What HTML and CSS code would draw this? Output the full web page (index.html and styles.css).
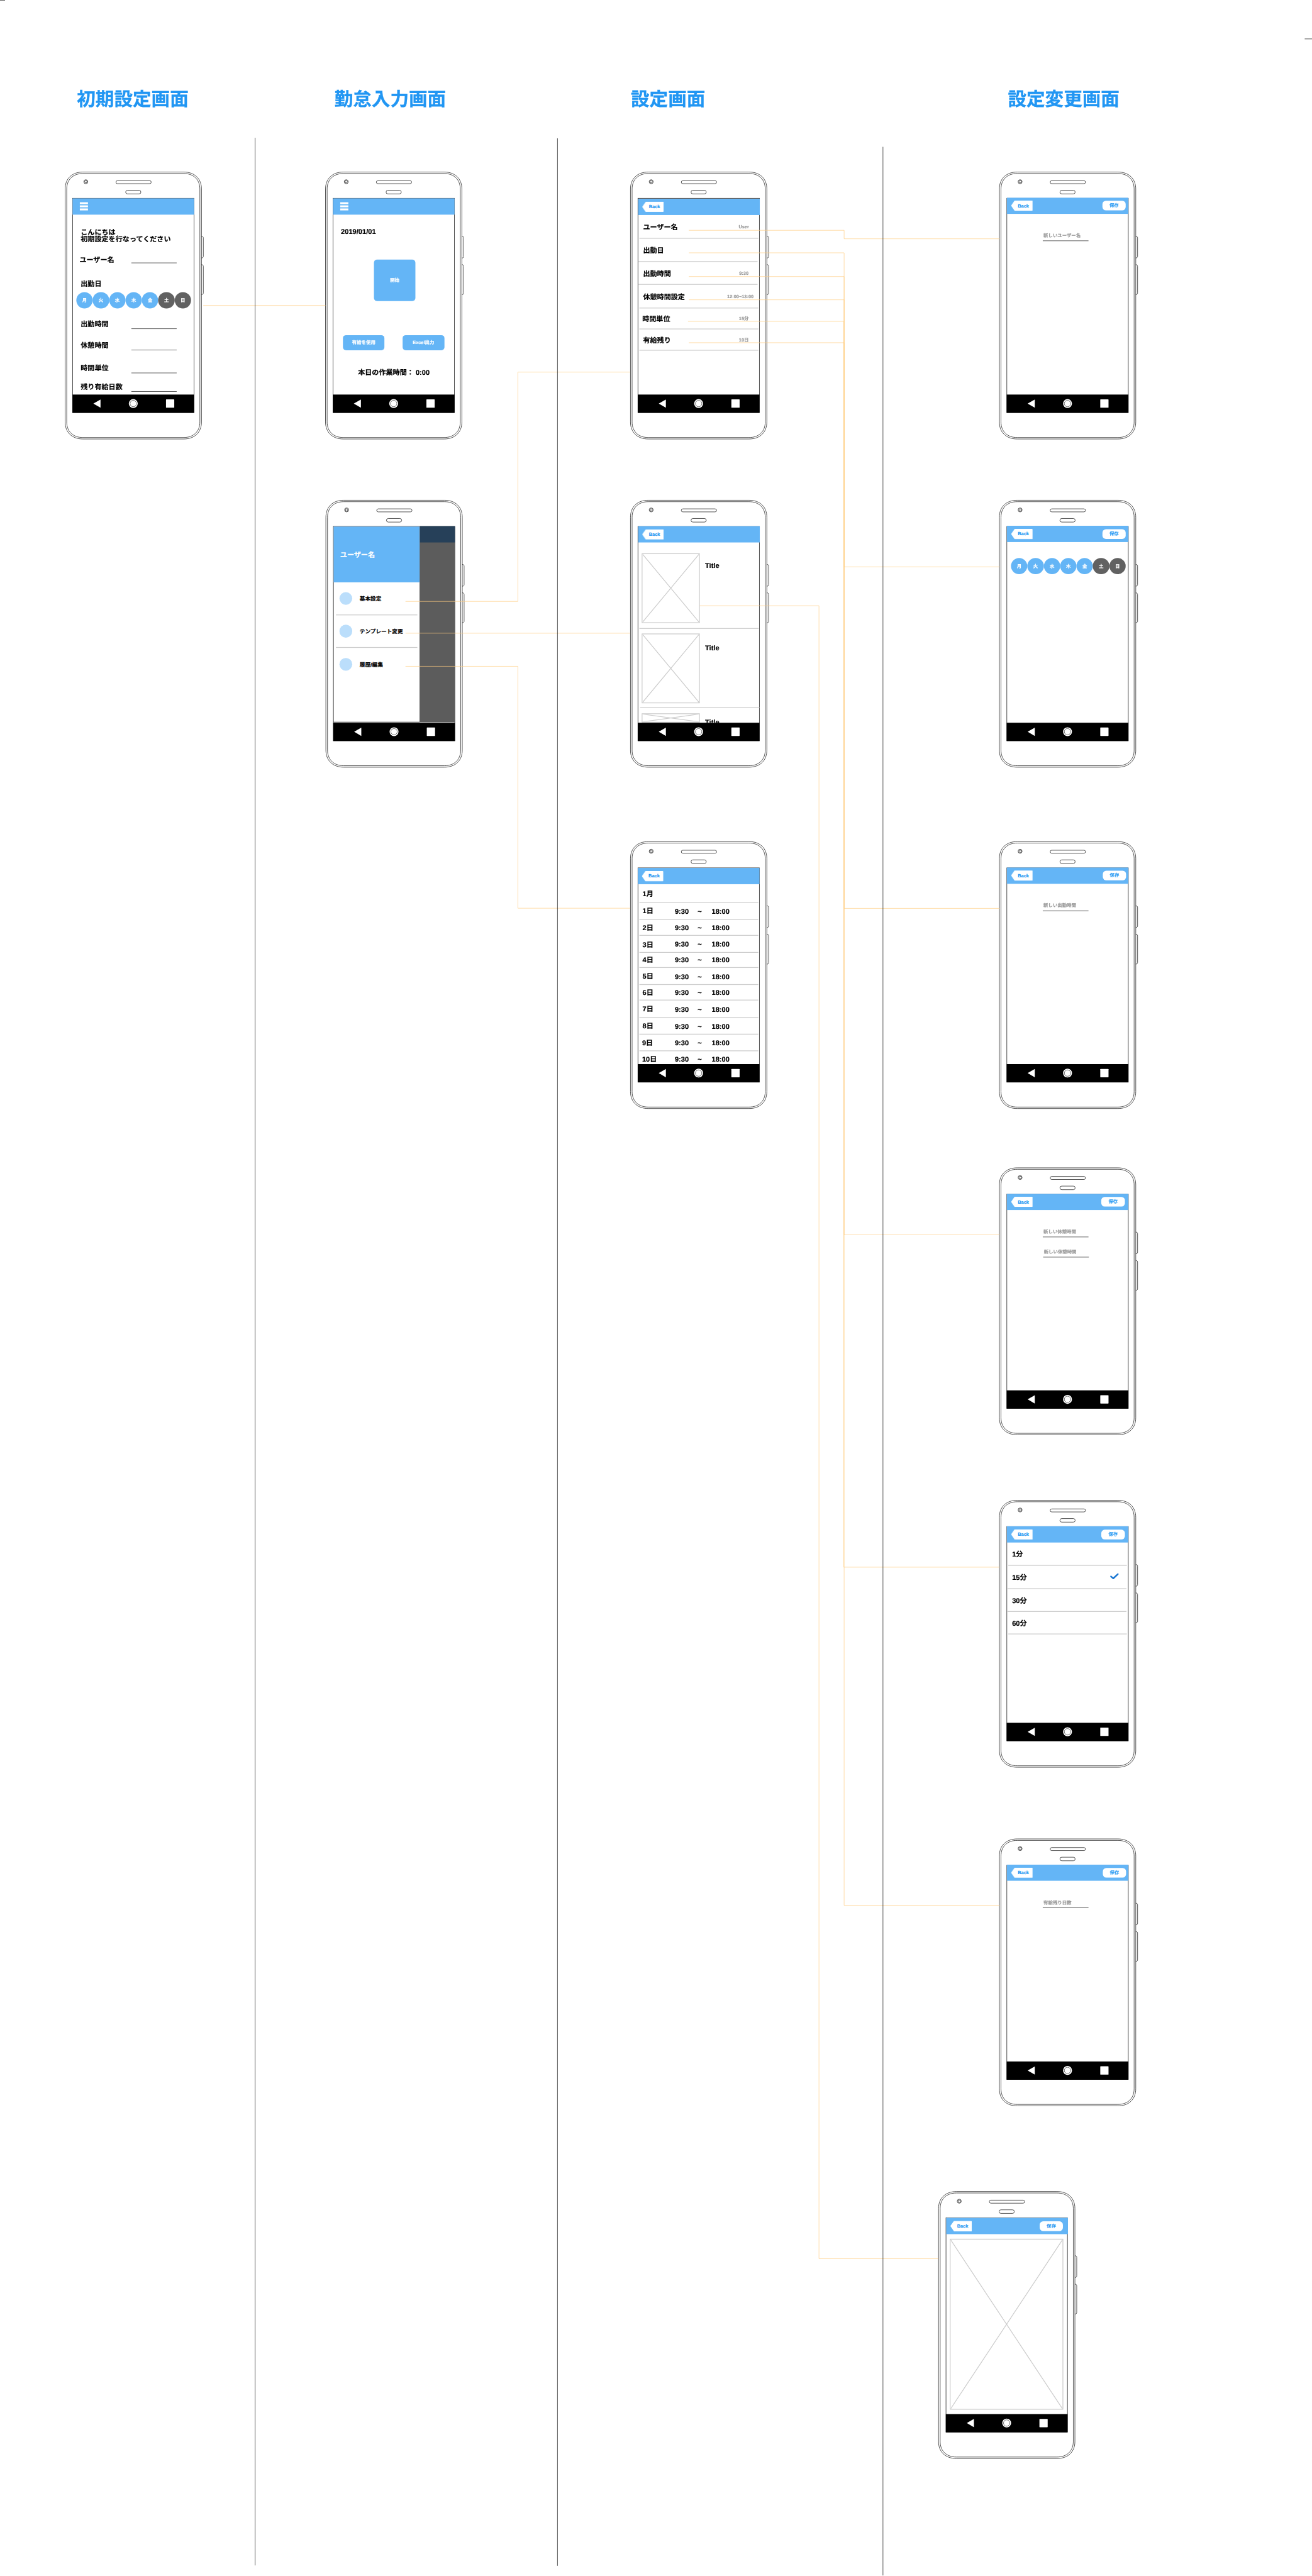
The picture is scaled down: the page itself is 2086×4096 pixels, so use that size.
FILE: index.html
```html
<!DOCTYPE html>
<html lang="ja">
<head>
<meta charset="utf-8">
<title>勤怠アプリ ワイヤーフレーム</title>
<link rel="stylesheet" href="styles.css">
</head>
<body>
<svg class="defs" aria-hidden="true">
  <symbol id="frame" viewBox="-2 -2 364 694">
    <g fill="none" stroke="#000" stroke-width="1.1">
      <path d="M46 0H306C334 0 352 17 352 44V645C352 672 334 689 306 689H46C18 689 0 672 0 645V44C0 17 18 0 46 0Z" fill="#fff"/>
      <path d="M46 3.8H306C331 3.8 347.8 19 347.8 44V645C347.8 670 331 685.2 306 685.2H46C21 685.2 4.2 670 4.2 645V44C4.2 19 21 3.8 46 3.8Z"/>
      <circle cx="53.5" cy="25" r="5.2"/><circle cx="53.5" cy="25" r="3.1"/>
      <rect x="131.2" y="22.3" width="91" height="7.8" rx="3.9"/>
      <rect x="156.3" y="47.2" width="39.3" height="9.2" rx="4.6"/>
      <path d="M352 165.8C355.5 165.8 356.7 167.500 356.700 170V217.500C356.700 220 355.500 221.800 352 221.800"/>
      <path d="M352 239C355.500 239 356.700 241 356.700 243.500V312C356.700 314.500 355.500 316.200 352 316.200"/>
      <rect x="19.300" y="67.800" width="313.400" height="553" stroke-width="1.300" stroke="#222"/>
    </g>
    <rect x="18.800" y="574.300" width="314.200" height="47.200"/>
    <path d="M73 597.600L91.400 587V608.300Z" fill="#fff"/>
    <circle cx="175.900" cy="597.500" r="11.500" fill="#fff"/>
    <circle cx="175.900" cy="597.500" r="8.200" fill="none" stroke="#000" stroke-width=".9"/>
    <rect x="260.400" y="586.700" width="21.300" height="21.600" rx="1" fill="#fff"/>
  </symbol>
  <symbol id="cross" viewBox="0 0 100 100" preserveAspectRatio="none">
    <path d="M0 0L100 100M100 0L0 100" stroke="#ccc" stroke-width="2" fill="none" vector-effect="non-scaling-stroke"/>
  </symbol>
</svg>

<div class="viewport">
<main class="board">
  <h2 class="heading h-setup">初期設定画面</h2>
  <h2 class="heading h-input">勤怠入力画面</h2>
  <h2 class="heading h-settings">設定画面</h2>
  <h2 class="heading h-change">設定変更画面</h2>

  <section class="phone p-setup">
    <svg class="frame"><use href="#frame"/></svg>
    <div class="screen">
      <header class="bar bar-menu"><i></i><i></i><i></i></header>
      <div class="setup">
        <p class="greeting">こんにちは<br>初期設定を行なってください</p>
        <div class="field field-name"><span>ユーザー名</span><b></b></div>
        <div class="field"><span>出勤日</span></div>
        <div class="days"><span>月</span><span>火</span><span>水</span><span>木</span><span>金</span><span class="off">土</span><span class="off">日</span></div>
        <div class="field"><span>出勤時間</span><b></b></div>
        <div class="field"><span>休憩時間</span><b></b></div>
        <div class="field"><span>時間単位</span><b></b></div>
        <div class="field"><span>残り有給日数</span><b></b></div>
      </div>
    </div>
  </section>

  <section class="phone p-input">
    <svg class="frame"><use href="#frame"/></svg>
    <div class="screen">
      <header class="bar bar-menu"><i></i><i></i><i></i></header>
      <div class="input">
        <p class="date">2019/01/01</p>
        <div class="start">開始</div>
        <div class="actions"><span>有給を使用</span><span>Excel出力</span></div>
        <p class="total">本日の作業時間： 0:00</p>
      </div>
    </div>
  </section>

  <section class="phone p-settings">
    <svg class="frame"><use href="#frame"/></svg>
    <div class="screen">
      <header class="bar"><span class="back">Back</span></header>
      <ul class="list list-settings">
        <li><span>ユーザー名</span><em>User</em></li>
        <li class="shift"><span>出勤日</span></li>
        <li class="shift"><span>出勤時間</span><em>9:30</em></li>
        <li><span>休憩時間設定</span><em class="wide">12:00~13:00</em></li>
        <li class="outdent"><span>時間単位</span><em>15分</em></li>
        <li><span>有給残り</span><em>10日</em></li>
      </ul>
    </div>
  </section>

  <section class="phone p-drawer">
    <svg class="frame"><use href="#frame"/></svg>
    <div class="screen">
      <div class="drawer-view">
        <nav class="drawer">
          <header>ユーザー名</header>
          <div class="item"><i></i><span>基本設定</span></div>
          <div class="item"><i></i><span>テンプレート変更</span></div>
          <div class="item"><i></i><span>履歴/編集</span></div>
        </nav>
        <div class="scrim"></div>
      </div>
    </div>
  </section>

  <section class="phone p-template">
    <svg class="frame"><use href="#frame"/></svg>
    <div class="screen">
      <header class="bar"><span class="back">Back</span></header>
      <div class="cards">
        <article><svg class="thumb"><use href="#cross"/></svg><h3>Title</h3></article>
        <article><svg class="thumb"><use href="#cross"/></svg><h3>Title</h3></article>
        <article><svg class="thumb"><use href="#cross"/></svg><h3>Title</h3></article>
      </div>
    </div>
  </section>

  <section class="phone p-history">
    <svg class="frame"><use href="#frame"/></svg>
    <div class="screen">
      <header class="bar"><span class="back">Back</span></header>
      <ul class="list list-history">
        <li><span>1月</span></li>
        <li><span>1日</span><time>9:30</time><s>~</s><time>18:00</time></li>
        <li><span>2日</span><time>9:30</time><s>~</s><time>18:00</time></li>
        <li><span>3日</span><time>9:30</time><s>~</s><time>18:00</time></li>
        <li><span>4日</span><time>9:30</time><s>~</s><time>18:00</time></li>
        <li class="low"><span>5日</span><time>9:30</time><s>~</s><time>18:00</time></li>
        <li><span>6日</span><time>9:30</time><s>~</s><time>18:00</time></li>
        <li class="low"><span>7日</span><time>9:30</time><s>~</s><time>18:00</time></li>
        <li class="low"><span>8日</span><time>9:30</time><s>~</s><time>18:00</time></li>
        <li><span>9日</span><time>9:30</time><s>~</s><time>18:00</time></li>
        <li><span>10日</span><time>9:30</time><s>~</s><time>18:00</time></li>
      </ul>
    </div>
  </section>

  <section class="phone p-name">
    <svg class="frame"><use href="#frame"/></svg>
    <div class="screen">
      <header class="bar"><span class="back">Back</span><span class="save">保存</span></header>
      <div class="entry"><p>新しいユーザー名</p></div>
    </div>
  </section>

  <section class="phone p-days">
    <svg class="frame"><use href="#frame"/></svg>
    <div class="screen">
      <header class="bar"><span class="back">Back</span><span class="save">保存</span></header>
      <div class="days"><span>月</span><span>火</span><span>水</span><span>木</span><span>金</span><span class="off">土</span><span class="off">日</span></div>
    </div>
  </section>

  <section class="phone p-time">
    <svg class="frame"><use href="#frame"/></svg>
    <div class="screen">
      <header class="bar"><span class="back">Back</span><span class="save">保存</span></header>
      <div class="entry"><p>新しい出勤時間</p></div>
    </div>
  </section>

  <section class="phone p-rest">
    <svg class="frame"><use href="#frame"/></svg>
    <div class="screen">
      <header class="bar"><span class="back">Back</span><span class="save">保存</span></header>
      <div class="entry"><p>新しい休憩時間</p><p>新しい休憩時間</p></div>
    </div>
  </section>

  <section class="phone p-unit">
    <svg class="frame"><use href="#frame"/></svg>
    <div class="screen">
      <header class="bar"><span class="back">Back</span><span class="save">保存</span></header>
      <ul class="list list-unit">
        <li><span>1分</span></li>
        <li class="shift"><span>15分</span><svg class="check" viewBox="0 0 22 16"><path d="M2 8.500L8 13.600L20 2.300" fill="none" stroke="#1976d2" stroke-width="4" stroke-linecap="round" stroke-linejoin="round"/></svg></li>
        <li class="shift"><span>30分</span></li>
        <li><span>60分</span></li>
      </ul>
    </div>
  </section>

  <section class="phone p-leave">
    <svg class="frame"><use href="#frame"/></svg>
    <div class="screen">
      <header class="bar"><span class="back">Back</span><span class="save">保存</span></header>
      <div class="entry"><p>有給残り日数</p></div>
    </div>
  </section>

  <section class="phone p-preview">
    <svg class="frame"><use href="#frame"/></svg>
    <div class="screen">
      <header class="bar"><span class="back">Back</span><span class="save">保存</span></header>
      <svg class="thumb thumb-large"><use href="#cross"/></svg>
    </div>
  </section>

  <svg class="lines" viewBox="0 0 3386 6648">
    <g fill="none" stroke="#ffcc80" stroke-width="1.1">
      <path d="M524.600 788.400H840"/>
      <path d="M1046.400 1552.100H1336.500V960.400H1626.500"/>
      <path d="M1046.400 1634.200H1626.500"/>
      <path d="M1046.400 1719.600H1336.500V2344H1626.500"/>
      <path d="M1777.600 594.400H2178.400V616.300H2579.400"/>
      <path d="M1777.600 652.500H2178.400V1463H2579.400"/>
      <path d="M1777.600 713.700H2178.400V2344.400H2579.400"/>
      <path d="M1777.600 773.700H2178.400V3186.700H2579.400"/>
      <path d="M1775.500 829.400H2177.500V4044.600H2579.400"/>
      <path d="M1777.600 884.500H2178.400V4917.600H2579.400"/>
      <path d="M1805.700 1563.400H2113.500V5829.300H2421.700"/>
    </g>
    <g stroke="#000" stroke-width="1.100">
      <path d="M658.300 355.500V6621"/>
      <path d="M1438.700 357V6622"/>
      <path d="M2278.600 379V6647"/>
      <path d="M3367 100.400H3386"/>
      <path d="M0 .6H13"/>
    </g>
  </svg>
</main>
</div>
</body>
</html>
```

FILE: styles.css
```css
* { box-sizing: border-box; margin: 0; padding: 0; }

body {
  background: #fff;
  font-family: "Liberation Sans", "Noto Sans CJK JP", sans-serif;
  font-weight: 700;
  color: #000;
  text-rendering: geometricPrecision;
}

.defs { display: block; width: 0; height: 0; }

.viewport { width: 2086px; height: 4096px; overflow: hidden; }

.board {
  position: relative;
  width: 3386px;
  height: 6648px;
  transform: scale(0.6161);
  transform-origin: 0 0;
}

.lines { position: absolute; left: 0; top: 0; width: 3386px; height: 6648px; }

.heading {
  position: absolute;
  top: 232.500px;
  font-size: 48px;
  line-height: 48px;
  color: #2196f3;
  white-space: nowrap;
  -webkit-text-stroke: .5px;
}
.h-setup { left: 198.500px; }
.h-input { left: 863px; }
.h-settings { left: 1628px; }
.h-change { left: 2601px; }

/* Phones on the canvas */
.phone {
  --bar-top: 2px;
  --bar-left: 0px;
  --save-gap: 7px;
  position: absolute;
  width: 360px;
  height: 690px;
  padding: 66px 0 0 19px;
  font-size: 18px;
  line-height: 18px;
  white-space: nowrap;
  -webkit-text-stroke: .3px;
}
.frame { position: absolute; left: -2px; top: -2px; width: 364px; height: 694px; }

.p-setup { left: 168.200px; top: 443.700px; }
.p-input { left: 840.300px; top: 443.700px; }
.p-settings { left: 1626.500px; top: 443.700px; --bar-top: 3.300px; --bar-left: 1px; }
.p-name { left: 2579.400px; top: 443.700px; --bar-top: 0px; }
.p-drawer { left: 841.300px; top: 1290.700px; }
.p-template { left: 1626.500px; top: 1290.700px; --bar-top: 1.500px; --bar-left: 1px; }
.p-history { left: 1626.500px; top: 2172.200px; }
.p-days { left: 2579.400px; top: 1290.700px; --bar-top: .5px; }
.p-time { left: 2579.400px; top: 2172.200px; --bar-top: .4px; --save-gap: 6px; }
.p-rest { left: 2579.400px; top: 3014.300px; --bar-top: .4px; --save-gap: 9.500px; }
.p-unit { left: 2579.400px; top: 3872px; --bar-top: 1px; --save-gap: 9.500px; }
.p-leave { left: 2579.400px; top: 4746px; --bar-top: .2px; --save-gap: 6px; }
.p-preview { left: 2421.700px; top: 5656.200px; --bar-top: 2px; --bar-left: 1px; --save-gap: 12.500px; }

.screen {
  position: relative;
  width: 315px;
  height: 508.300px;
  overflow: hidden;
}

.bar {
  display: flex;
  align-items: center;
  justify-content: space-between;
  width: 314px;
  height: 42px;
  margin: var(--bar-top) 0 0 var(--bar-left);
  padding: 0 var(--save-gap) 0 10.800px;
  background: #64b5f6;
  font-size: 12px;
  line-height: 12px;
  color: #2196f3;
}
.bar-menu {
  flex-direction: column;
  align-items: flex-start;
  justify-content: center;
  gap: 3px;
  padding-left: 18.900px;
}
.bar-menu i { width: 20.700px; height: 5px; background: #fff; }

.back {
  width: 55.600px;
  height: 27px;
  padding: 7.800px 0 0 17.300px;
  background: #fff;
  border-radius: 0 2px 2px 0;
  clip-path: polygon(0 50%, 17% 0, 100% 0, 100% 100%, 17% 100%);
}
.save {
  width: 60.500px;
  height: 25px;
  border-radius: 9px;
  background: #fff;
  line-height: 25px;
  text-align: center;
  font-weight: 500;
}

/* Initial setup */
.setup {
  display: grid;
  align-items: end;
  grid-template-rows: 72.300px 57.700px 61.200px 51.100px 52.900px 55.200px 58.600px 48.500px;
}
.greeting { padding-left: 21px; margin-bottom: -1px; }
.field { display: flex; align-items: center; height: 28px; padding-left: 21px; }
.field span { width: 130.400px; padding-top: 2px; }
.field b { width: 117.500px; align-self: stretch; border-bottom: 1px solid #000; }
.field-name { padding-left: 18px; }
.field-name span { width: 133.400px; }
.field-name b { margin-bottom: 5px; }

.days { display: flex; padding-left: 10px; font-size: 12px; }
.days span {
  width: 42.250px;
  height: 42.250px;
  border-radius: 50%;
  background: #64b5f6;
  color: #fff;
  line-height: 42.250px;
  text-align: center;
}
.days .off { background: #616161; }
.p-days .days { padding: 40.600px 0 0 10.800px; }

/* Attendance input */
.input {
  display: grid;
  align-items: end;
  grid-template-rows: 53.300px 170.400px 126.700px 66px;
}
.date { padding-left: 20.500px; }
.start, .actions span {
  width: 107.600px;
  border-radius: 8px;
  background: #64b5f6;
  color: #fff;
  font-size: 12px;
  text-align: center;
}
.start { height: 107px; margin-left: 105.600px; line-height: 107px; }
.actions { display: flex; gap: 46.500px; padding-left: 25.600px; }
.actions span { height: 39.200px; line-height: 39.200px; }
.total { padding-left: 64.500px; margin-bottom: -.5px; }

/* Row lists */
.list { display: grid; width: 315px; list-style: none; }
.list li {
  display: flex;
  align-items: center;
  margin: 0 4px;
  padding-left: 10px;
  border-bottom: 2px solid #ccc;
}
.list span { padding-top: 2px; }
.list .shift { margin: 0 6px 0 1px; padding-left: 13px; }
.list em {
  width: 70px;
  margin-left: auto;
  margin-right: 2px;
  font-style: normal;
  font-size: 12px;
  text-align: center;
  color: #999;
}
.list .shift em { margin-right: 0; }
.list .wide { margin-right: 11px; }
.list .outdent { padding-left: 8px; }
.list-settings { grid-template-rows: 61.500px 60px 58.800px 61.200px 54px 55px; }

.list-unit { grid-template-rows: 60.400px 59.900px 58.900px 57.800px; }
.list-unit li { margin-right: 5px; padding-left: 9.500px; }
.list-unit .shift { padding-left: 12.500px; }
.check { width: 22px; height: 16px; margin: -5px 20.500px 0 auto; }

.list-history {
  grid-template-rows: 48px 43.500px 41.100px 44.400px 38.700px 43.900px 40.400px 44.500px 43.500px 43.300px 42px;
}
.list-history li { padding-left: 8.500px; }
.list-history span { width: 83.500px; padding-top: 1px; }
.list-history time, .list-history s { padding-top: 1.500px; }
.list-history time:first-of-type { width: 59px; }
.list-history s { width: 36px; text-decoration: none; }
.list-history .low time, .list-history .low s { padding-top: 5px; }
.list-history li:first-child span { padding-top: 3px; }
.list-history li:nth-child(4) span { padding-top: 5px; }
.list-history li:nth-child(10), .list-history li:nth-child(11) { padding-left: 7.500px; }
.list-history li:nth-child(10) span, .list-history li:nth-child(11) span { width: 84.500px; }

/* Drawer */
.drawer-view { display: flex; width: 313.500px; height: 507px; padding-top: 1.500px; }
.drawer {
  width: 223.600px;
  border: 1.500px solid #000;
  background: #fff;
}
.drawer header {
  height: 144px;
  padding: 63.500px 0 0 16.500px;
  background: #64b5f6;
  color: #fff;
}
.item {
  display: flex;
  align-items: center;
  gap: 19px;
  height: 84.500px;
  margin: 0 5.500px;
  padding-left: 8.800px;
  border-bottom: 2px solid #ccc;
  font-size: 14px;
}
.item span { padding-top: 2px; }
.item:last-child { border-bottom: 0; }
.item i { width: 33.600px; height: 33.600px; border-radius: 50%; background: #bbdefb; }
.scrim { flex: 1; border-top: 42.500px solid #264059; background: #5c5c5c; }

/* Template cards */
.cards { display: grid; grid-template-rows: 222.800px 203.900px 80px; }
.cards article {
  display: flex;
  gap: 13.500px;
  margin: 0 2.500px 0 4.300px;
  padding: 12.200px 0 0 6.100px;
  border-bottom: 2px solid #ccc;
}
.cards article:first-child { padding-top: 27.800px; }
.cards article:nth-child(2) { margin: 0 1px 0 6.300px; padding-left: 4.100px; }
.cards article:last-child { padding-top: 13.800px; }
.cards h3 { font-size: 18px; line-height: 18px; padding-top: 23px; }
.cards article:nth-child(2) h3 { padding-top: 27.500px; }
.cards article:last-child h3 { padding-top: 14.500px; }
.thumb { width: 150.200px; height: 180px; border: 2px solid #ccc; }
.cards article:last-child .thumb { height: 24px; }
.thumb-large { display: block; width: 293.200px; height: 441.200px; margin: 11.600px 0 0 10.100px; }

/* Value entry */
.entry { padding: 50px 0 0 93px; font-size: 12px; color: #999; }
.entry p {
  width: 117.500px;
  height: 20px;
  padding-left: 1.500px;
  line-height: 13px;
  border-bottom: 1px solid #000;
}
.entry p + p { margin: 32px 0 0 1px; }
```
